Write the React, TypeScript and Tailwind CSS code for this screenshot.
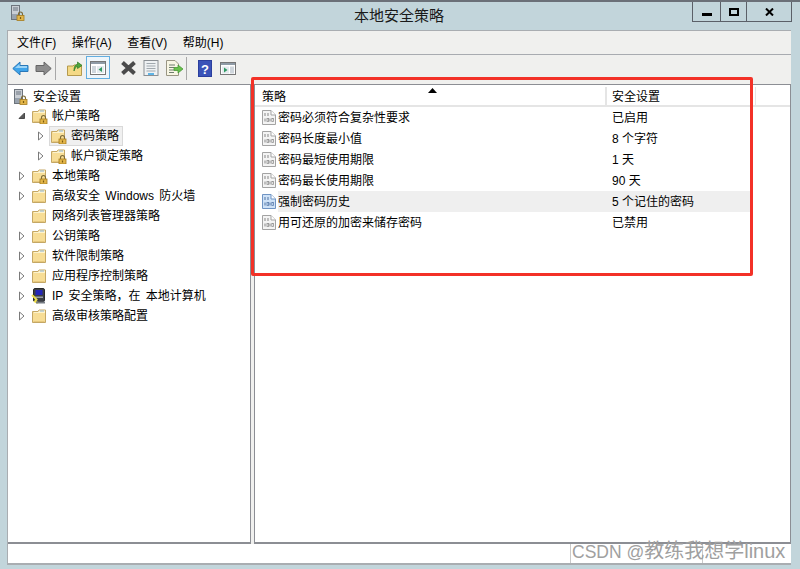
import React from "react";

const font = { fontFamily: '"Liberation Sans","Noto Sans CJK SC",sans-serif' };

function Lock({ x = 8, y = 9 }: { x?: number; y?: number }) {
  return (
    <g transform={`translate(${x} ${y})`}>
      <path d="M2 3.500V2.200C2 .8 3 0 4 0s2 .8 2 2.200V3.500" fill="none" stroke="#7a6a3a" strokeWidth="1.1" />
      <rect x="0.5" y="3.500" width="7" height="5" fill="#e3b64a" stroke="#a57c1e" strokeWidth="0.8" />
      <rect x="3.400" y="5" width="1.200" height="2" fill="#7a5a10" />
    </g>
  );
}

function Folder({ lock }: { lock?: boolean }) {
  return (
    <svg width="17" height="16" viewBox="0 0 17 16" className="shrink-0">
      <path d="M1.500 3.500V14.500H14.500V2H8L7 3.500Z" fill="#f7dd96" stroke="#c4a765" strokeWidth="1" />
      <path d="M3 5H14V2.600H8.400L7.400 4H3Z" fill="#fdf3cd" />
      <path d="M9 3H13" stroke="#8fb4d4" strokeWidth="1" />
      <path d="M2.500 13.500H13.500" stroke="#e6c87d" strokeWidth="1" />
      {lock && <Lock x={8.5} y={7.5} />}
    </svg>
  );
}

function ServerLock() {
  return (
    <svg width="14" height="16" viewBox="0 0 14 16" className="shrink-0">
      <rect x="0.5" y="0.5" width="8" height="14" fill="#c9ced4" stroke="#6d747c" />
      <path d="M2 3H7M2 5H7" stroke="#6b7580" strokeWidth="1" />
      <rect x="1" y="9" width="7" height="5" fill="#98a2ad" />
      <Lock x={5.5} y={7} />
    </svg>
  );
}

function Ipsec() {
  return (
    <svg width="17" height="16" viewBox="0 0 17 16" className="shrink-0">
      <rect x="2.500" y="0.5" width="11" height="13" rx="1.500" fill="#3c3f46" stroke="#26282c" />
      <rect x="4.500" y="2" width="7" height="5" fill="#2426b8" />
      <rect x="4" y="8.500" width="8" height="1.500" fill="#9aa0a8" />
      <path d="M1 7L5.500 11.500L4 13.500L7 15" fill="none" stroke="#efe04a" strokeWidth="2" />
      <rect x="5" y="13.500" width="9" height="2" fill="#777c84" />
    </svg>
  );
}

function Policy({ active }: { active?: boolean }) {
  const s = active ? "#6f94c4" : "#a3a3a3";
  const t = active ? "#5d7fae" : "#929292";
  return (
    <svg width="14" height="15" viewBox="0 0 14 15" className="shrink-0">
      <path d="M.5.500H9L13.500 5V14.500H.5Z" fill={active ? "#cfe2f7" : "#f4f4f4"} stroke={s} />
      <path d="M9 .5V5H13.500" fill="#fff" stroke={s} />
      <path d="M3 3V6M6 3V6M3 8.500V11.500M8 8.500V11.500" stroke={t} strokeWidth="1.1" />
      <rect x="5" y="8.500" width="1.600" height="3" fill="none" stroke={t} strokeWidth="0.8" />
      <rect x="9.800" y="8.500" width="1.600" height="3" fill="none" stroke={t} strokeWidth="0.8" />
    </svg>
  );
}

function Tri({ open, hidden }: { open?: boolean; hidden?: boolean }) {
  return (
    <svg width="8" height="10" viewBox="0 0 8 10" className="shrink-0">
      {hidden ? null : open ? (
        <path d="M6.500 2V7.500H1Z" fill="#5a5a5a" stroke="#4a4a4a" />
      ) : (
        <path d="M1.500 1L6 5L1.500 9Z" fill="#fff" stroke="#7a7a7a" />
      )}
    </svg>
  );
}

function TreeRow({
  label,
  level,
  icon,
  open,
  noTri,
  selected,
}: {
  label: string;
  level: 1 | 2;
  icon: React.ReactNode;
  open?: boolean;
  noTri?: boolean;
  selected?: boolean;
}) {
  return (
    <div className={`flex h-5 items-center ${level === 1 ? "pl-[10px]" : "pl-[29px]"}`}>
      <Tri open={open} hidden={noTri} />
      <div
        className={`ml-[4px] flex h-5 items-center gap-[4px] border pr-[3px] ${
          selected ? "border-[#d9d9d9] bg-[#f0f0f0]" : "border-transparent"
        }`}
      >
        {icon}
        <span className="whitespace-pre [word-spacing:2px]">{label}</span>
      </div>
    </div>
  );
}

function PolicyRow({ name, value, active }: { name: string; value: string; active?: boolean }) {
  return (
    <div className="flex h-[21px] items-center pl-[7px]">
      <Policy active={active} />
      <div className={`ml-[2px] flex h-[21px] w-[475px] items-center pl-0 ${active ? "bg-[#efefef]" : ""}`}>
        <span className="w-[334px] shrink-0">{name}</span>
        <span className="whitespace-pre">{value}</span>
      </div>
    </div>
  );
}

function ToolbarIcons() {
  return (
    <div className="flex h-[29px] shrink-0 items-start bg-[#f0f0ee] pl-[4px] pt-[1px]">
      <svg width="17" height="17" viewBox="0 0 17 17" className="mt-[4px]">
        <path d="M.8 8.500L8 2V5.500H16V11.500H8V15Z" fill="#3fa4ea" stroke="#2a78b8" />
        <path d="M3 8H15V6H7.500V4Z" fill="#9bd4f7" />
      </svg>
      <svg width="17" height="17" viewBox="0 0 17 17" className="ml-[6px] mt-[4px]">
        <path d="M16.200 8.500L9 2V5.500H1V11.500H9V15Z" fill="#8d8d8d" stroke="#666" />
      </svg>
      <div className="ml-[3px] mt-[1px] h-[23px] w-px bg-[#a8a8a8]" />
      <svg width="16" height="17" viewBox="0 0 16 17" className="ml-[11px] mt-[4px]">
        <path d="M.5 6V15.500H14.500V5H7L6 6Z" fill="#f4d985" stroke="#b59a4e" />
        <path d="M7 11C7 6 8.500 4.500 10.500 4.500V2L15 5.500L10.500 8.500V6.500C9 6.500 8 8 7 11Z" fill="#4ea63e" stroke="#2c7a24" strokeWidth="0.7" />
      </svg>
      <div className="ml-[3px] flex h-[23px] w-[24px] items-center justify-center border border-[#63aee0] bg-[#eef5fa]">
        <svg width="16" height="14" viewBox="0 0 16 14">
          <rect x=".5" y=".5" width="15" height="13" fill="#fff" stroke="#777" />
          <rect x="1" y="1" width="14" height="2" fill="#8f9ba6" />
          <rect x="2" y="5" width="4" height="7" fill="#cfd6dc" />
          <rect x="7" y="5" width="7" height="7" fill="#e5eaee" />
          <path d="M12 6V11L8.500 8.500Z" fill="#2f9a62" />
        </svg>
      </div>
      <svg width="17" height="16" viewBox="0 0 17 16" className="ml-[10px] mt-[4px]">
        <path d="M2.500 2.500L14.500 13.500M14.500 2.500L2.500 13.500" stroke="#4b4b4b" strokeWidth="4" />
      </svg>
      <svg width="16" height="16" viewBox="0 0 16 16" className="ml-[6px] mt-[4px]">
        <rect x="1" y=".5" width="14" height="15" fill="#eef1f3" stroke="#8a8f94" />
        <path d="M3.500 3.500H12.500M3.500 6H12.500M3.500 8.500H12.500M3.500 11H12.500" stroke="#a0a8ae" />
        <rect x="5" y="13" width="6" height="2" fill="#5eb4e6" />
      </svg>
      <svg width="18" height="17" viewBox="0 0 18 17" className="ml-[7px] mt-[4px]">
        <path d="M.5.500H9L12.500 4V15.500H.5Z" fill="#f8f6e4" stroke="#9a9684" />
        <path d="M3 5H9M3 7.500H8M3 10H8M3 12.500H8" stroke="#6f7c6e" />
        <path d="M8 7.500H12V5L17 9L12 13V10.500H8Z" fill="#69c24c" stroke="#3f8f2e" strokeWidth=".7" />
      </svg>
      <div className="ml-[2px] mt-[1px] h-[23px] w-px bg-[#a8a8a8]" />
      <svg width="14" height="17" viewBox="0 0 14 17" className="ml-[11px] mt-[4px]">
        <rect width="14" height="17" fill="#2b3f9e" />
        <rect x="1" y="1" width="12" height="15" fill="#3a53b8" />
        <text x="7" y="13.500" textAnchor="middle" fontSize="13" fontWeight="700" fill="#fff" fontFamily="Liberation Sans">?</text>
      </svg>
      <svg width="16" height="13" viewBox="0 0 16 13" className="ml-[8px] mt-[6px]">
        <rect x=".5" y=".5" width="15" height="12" fill="#fff" stroke="#777" />
        <rect x="1" y="1" width="14" height="2" fill="#8f9ba6" />
        <rect x="2" y="4.500" width="7" height="7" fill="#e5eaee" />
        <rect x="10" y="4.500" width="4" height="7" fill="#cfd6dc" />
        <path d="M4 5.500V10.500L7.500 8Z" fill="#2f9a62" />
      </svg>
    </div>
  );
}

export default function App() {
  return (
    <div
      style={font}
      className="relative flex h-[569px] w-[800px] flex-col overflow-hidden border-t-2 border-[#6b7078] bg-[#c2d5db] text-[12px] leading-none text-black"
    >
      <div className="relative flex h-[28px] shrink-0 items-start">
        <div className="ml-[11px] mt-[3px]">
          <ServerLock />
        </div>
        <div className="absolute left-[-2px] right-0 top-[6px] text-center text-[15px] leading-[15px] text-[#1a1a1a]">本地安全策略</div>
        <div className="absolute left-[692px] top-0 flex h-[20px] border-x border-b border-[#5b6068]">
          <div className="flex w-[28px] items-center justify-center border-r border-[#5b6068] pt-[5px]">
            <div className="h-[3px] w-[10px] bg-black" />
          </div>
          <div className="flex w-[26px] items-center justify-center border-r border-[#5b6068]">
            <div className="h-[8px] w-[10px] border-2 border-black" />
          </div>
          <div className="flex w-[44px] items-center justify-center">
            <svg width="9" height="8" viewBox="0 0 9 8">
              <path d="M1 0.500L8 7.500M8 0.500L1 7.500" stroke="#000" strokeWidth="2" />
            </svg>
          </div>
        </div>
      </div>

      <div className="ml-[7px] mr-[9px] flex min-h-0 flex-1 flex-col border-l border-t border-[#a9adb1] bg-[#f0f0ee]">
        <div className="flex h-[24px] shrink-0 items-center gap-[15.5px] border-b border-[#a8abb0] pl-[9px] pt-[1px]">
          <span>文件(F)</span>
          <span>操作(A)</span>
          <span>查看(V)</span>
          <span>帮助(H)</span>
        </div>
        <ToolbarIcons />
        <div className="flex min-h-0 flex-1">
          <div className="w-[243px] shrink-0 border-b-2 border-r border-t border-[#8c8e94] bg-white pt-[2px]">
            <div className="flex h-[19px] items-center gap-[5px] pl-[6px]">
              <ServerLock />
              <span>安全设置</span>
            </div>
            <TreeRow level={1} label="帐户策略" open icon={<Folder lock />} />
            <TreeRow level={2} label="密码策略" selected icon={<Folder lock />} />
            <TreeRow level={2} label="帐户锁定策略" icon={<Folder lock />} />
            <TreeRow level={1} label="本地策略" icon={<Folder lock />} />
            <TreeRow level={1} label="高级安全 Windows 防火墙" icon={<Folder />} />
            <TreeRow level={1} label="网络列表管理器策略" noTri icon={<Folder />} />
            <TreeRow level={1} label="公钥策略" icon={<Folder />} />
            <TreeRow level={1} label="软件限制策略" icon={<Folder />} />
            <TreeRow level={1} label="应用程序控制策略" icon={<Folder />} />
            <TreeRow level={1} label="IP 安全策略，在 本地计算机" icon={<Ipsec />} />
            <TreeRow level={1} label="高级审核策略配置" icon={<Folder />} />
          </div>
          <div className="w-[3px] shrink-0 bg-[#f0f0ee]" />
          <div className="min-w-0 flex-1 border-b-2 border-x border-t border-[#8c8e94] bg-white">
            <div className="relative flex h-[22px] items-center border-b-2 border-[#e5e5e5] pl-[7px] pt-[3px]">
              <span className="w-[343px] shrink-0">策略</span>
              <div className="h-[20px] w-[2px] shrink-0 bg-[#e5e5e5]" />
              <span className="ml-[5px] w-[143px] shrink-0">安全设置</span>
              <div className="h-[20px] w-[1px] shrink-0 bg-[#e5e5e5]" />
              <svg width="9" height="5" viewBox="0 0 9 5" className="absolute left-[173px] top-[3px]">
                <path d="M4.500 0L9 5H0Z" fill="#000" />
              </svg>
            </div>
            <PolicyRow name="密码必须符合复杂性要求" value="已启用" />
            <PolicyRow name="密码长度最小值" value="8 个字符" />
            <PolicyRow name="密码最短使用期限" value="1 天" />
            <PolicyRow name="密码最长使用期限" value="90 天" />
            <PolicyRow name="强制密码历史" value="5 个记住的密码" active />
            <PolicyRow name="用可还原的加密来储存密码" value="已禁用" />
          </div>
        </div>
        <div className="flex h-[21px] shrink-0 border-b-2 border-[#a9adb1] bg-white">
          <div className="w-[563px] border-r border-[#c9c9c9]" />
          <div className="w-[132px] border-r border-[#c9c9c9]" />
          <div className="flex-1" />
        </div>
      </div>
      <div className="h-[4px] shrink-0" />

      <div className="pointer-events-none absolute left-[251px] top-[75px] h-[199px] w-[502px] rounded-[2px] border-[3px] border-[#f33127]" />
      <div className="absolute left-[572px] top-[538px] whitespace-pre text-[17.5px] leading-[22px] text-[#a0a0a0]">
        CSDN @<span className="text-[20px]">教练我想学</span>
        <span className="text-[20px]">linux</span>
      </div>
    </div>
  );
}
